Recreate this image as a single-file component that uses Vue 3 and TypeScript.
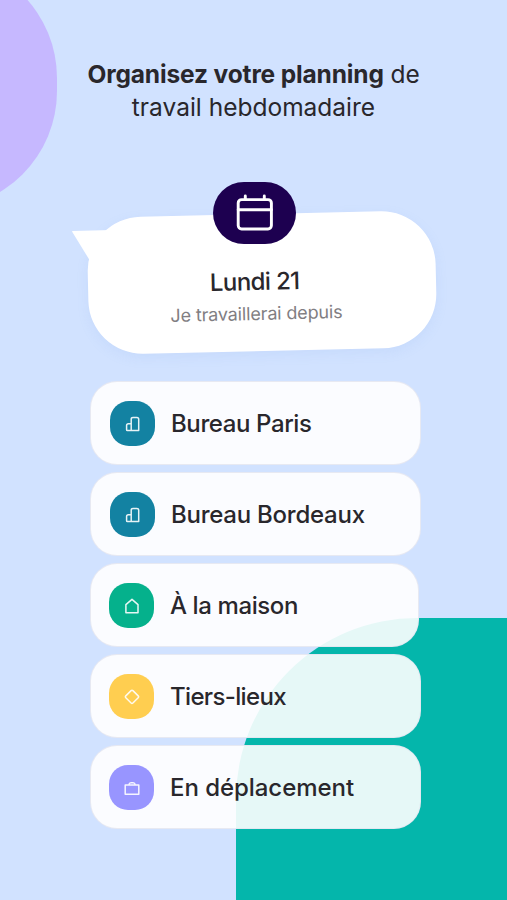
<script setup lang="ts">
type IconName = 'office' | 'home' | 'diamond' | 'case'

interface Place {
  key: string
  label: string
  icon: IconName
  tone: string
}

const places: Place[] = [
  { key: 'paris', label: 'Bureau Paris', icon: 'office', tone: 'blue' },
  { key: 'bordeaux', label: 'Bureau Bordeaux', icon: 'office', tone: 'blue' },
  { key: 'maison', label: 'À la maison', icon: 'home', tone: 'green' },
  { key: 'tiers', label: 'Tiers-lieux', icon: 'diamond', tone: 'yellow' },
  { key: 'trajet', label: 'En déplacement', icon: 'case', tone: 'violet' },
]

const iconPaths: Record<IconName, string> = {
  office: 'M6.2 14.6V3.2Q6.2 1.4 8 1.4H11.9Q13.7 1.4 13.7 3.2V14.6H2.4Q1.6 14.6 1.6 13.8V9.6Q1.6 7.8 3.4 7.8H6.2',
  home: 'M1.9 6.6L8 1.4L14 6.6V14.7H1.9Z',
  diamond: 'M7.1 1.6Q8 .7 8.9 1.6L14.2 6.9Q15.1 7.8 14.2 8.7L8.9 14Q8 14.9 7.1 14L1.8 8.7Q.9 7.8 1.8 6.9Z',
  case: 'M1.2 4.9H14.8V14.3H1.2ZM4.9 4.6Q5.2 2.7 7 2.7H9.1Q10.9 2.7 11.2 4.6',
}
</script>

<template>
  <main class="screen">
    <div class="blob blob-violet"></div>
    <div class="blob blob-teal"></div>

    <h1 class="title"><span class="strong-line"><strong>Organisez votre planning</strong> de</span><span class="second-line">travail hebdomadaire</span></h1>

    <section class="day">
      <div class="bubble"></div>
      <svg class="tail" width="40" height="36" viewBox="0 0 40 36"><path d="M0 5.5Q0 5 .8 5L40 4V33L17.5 34Z" fill="#fff" /></svg>
      <div class="calendar">
        <svg width="40" height="40" viewBox="0 0 40 40" fill="none" stroke="#fff" stroke-width="2.9" stroke-linecap="round" stroke-linejoin="round">
          <rect x="3.2" y="6.6" width="33.2" height="29.4" rx="3.4" />
          <path d="M3.2 16.8H36.4M10.3 3V6.6M29.3 3V6.6" />
        </svg>
      </div>
      <div class="day-text">
        <h2>Lundi 21</h2>
        <p>Je travaillerai depuis</p>
      </div>
    </section>

    <ul class="places">
      <li v-for="place in places" :key="place.key" class="place" :class="place.key">
        <span class="badge" :class="place.tone">
          <svg width="16" height="16" viewBox="0 0 16 16" fill="none" stroke="currentColor" stroke-width="1.5" stroke-linejoin="round">
            <path :d="iconPaths[place.icon]" />
          </svg>
        </span>
        <span class="label">{{ place.label }}</span>
      </li>
    </ul>
  </main>
</template>

<style>
body {
  background: #d1e2ff;
}
</style>

<style scoped>
.screen {
  position: relative;
  box-sizing: border-box;
  width: 507px;
  height: 900px;
  padding-top: 58px;
  overflow: hidden;
  background: #d1e2ff;
  color: #29272c;
  font-family: Inter, "Liberation Sans", sans-serif;
}
.blob {
  position: absolute;
}
.blob-violet {
  left: -200px;
  top: -40px;
  width: 257px;
  height: 249px;
  border-radius: 118px;
  background: #c6b8ff;
}
.blob-teal {
  left: 236px;
  top: 618px;
  width: 300px;
  height: 300px;
  border-top-left-radius: 181px;
  background: #04b6ab;
}
.title {
  position: relative;
  display: flex;
  flex-direction: column;
  align-items: center;
  height: 124px;
  margin: 0;
  font-size: 24.5px;
  font-weight: 400;
  line-height: 32.5px;
  white-space: nowrap;
}
.title strong {
  font-weight: 700;
}
.strong-line {
  letter-spacing: -0.14px;
}
.second-line {
  letter-spacing: 0;
}
.day {
  position: relative;
  display: flex;
  flex-direction: column;
  align-items: center;
  height: 199px;
}
.bubble {
  position: absolute;
  left: 88px;
  top: 32px;
  width: 348px;
  height: 137px;
  border-radius: 54px;
  background: #fff;
  transform: rotate(-1.3deg);
  box-shadow: 0 4px 12px rgba(130, 170, 230, 0.13);
}
.tail {
  position: absolute;
  left: 72px;
  top: 44px;
}
.calendar {
  position: relative;
  display: grid;
  place-items: center;
  width: 83px;
  height: 62px;
  margin-left: 2px;
  border-radius: 31px;
  background: #1d0050;
}
.day-text {
  position: relative;
  margin: 21px 0 0 5px;
  text-align: center;
  transform: rotate(-1.3deg);
}
.day-text h2 {
  margin: 0 2px 0 0;
  font-size: 24px;
  font-weight: 500;
  line-height: 33px;
  letter-spacing: -0.6px;
}
.day-text p {
  margin: 3px 0 0;
  color: #817e82;
  font-size: 18px;
  line-height: 26px;
  letter-spacing: -0.15px;
}
.places {
  position: relative;
  display: flex;
  flex-direction: column;
  gap: 7px;
  width: 331px;
  margin: 0 0 0 90px;
  padding: 0;
  list-style: none;
}
.place {
  display: flex;
  align-items: center;
  gap: 16px;
  box-sizing: border-box;
  height: 84px;
  padding: 1px 0 0 19px;
  border: 1px solid rgba(226, 228, 239, 0.8);
  border-radius: 27px;
  background: rgba(255, 255, 255, 0.9);
  letter-spacing: -0.4px;
}
.bordeaux {
  letter-spacing: -0.25px;
}
.maison {
  width: 329px;
}
.maison,
.tiers,
.trajet {
  padding-left: 18px;
}
.tiers {
  letter-spacing: -0.65px;
}
.trajet {
  letter-spacing: -0.05px;
}
.badge {
  display: grid;
  place-items: center;
  width: 45px;
  height: 45px;
  border-radius: 19px;
  color: rgba(255, 255, 255, 0.9);
}
.blue {
  background: #1382a2;
}
.green {
  background: #05b18c;
}
.yellow {
  background: #ffce50;
}
.violet {
  background: #9895ff;
}
.label {
  font-size: 24px;
  font-weight: 500;
  line-height: 32px;
  white-space: nowrap;
}
</style>
